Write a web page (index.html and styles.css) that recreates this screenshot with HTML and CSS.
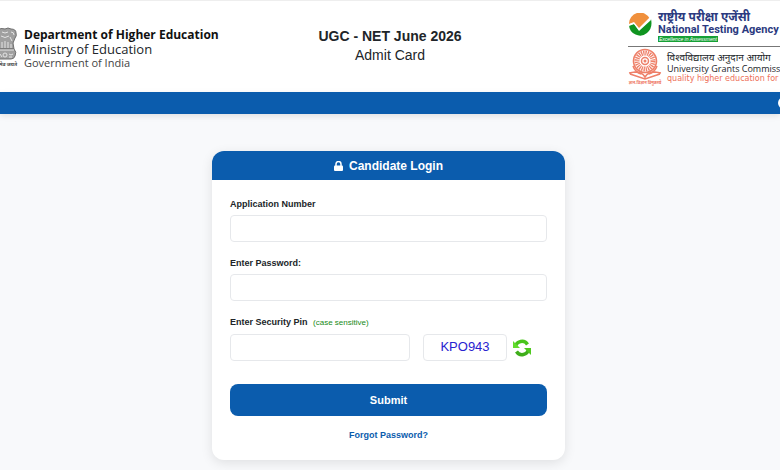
FILE: index.html
```html
<!DOCTYPE html>
<html lang="en">
<head>
    <meta charset="UTF-8">
    <meta name="viewport" content="width=device-width, initial-scale=1.0">
    <title>UGC - NET June 2026 Admit Card</title>
    <link rel="stylesheet" href="styles.css">
</head>
<body>
    <header class="header">
        <div class="brand">
            <!-- State emblem -->
            <svg class="emblem" viewBox="8 0 18 42" aria-hidden="true">
                <g fill="#a0a0a0" stroke="#707070" stroke-width="1">
                    <path d="M5 4q4-4 8-2q3-2 6 0q5 0 5 4q1 3-1 5l-2 5l1 6H5z"/>
                    <path d="M5 22h17q3 3 1 7q-1 3-4 3H5z"/>
                </g>
                <g fill="none" stroke="#e4e4e4" stroke-width="1">
                    <path d="M10 5q3 2 6 0M9 9q4 3 8 0M19 5q3 0 3 3M18 10l2 4M10 15v6M13 14v7M16 15v6M19 17v4M5 23h17"/>
                    <circle cx="13" cy="28" r="2"/>
                    <path d="M8 27l2 3M17 27q2 2 4 0M17 30h3"/>
                </g>
                <text class="emblem-text" x="25" y="39" text-anchor="end" lang="hi">सत्यमेव जयते</text>
            </svg>
            <div class="brand-text">
                <strong class="department">Department of Higher Education</strong>
                <span class="ministry">Ministry of Education</span>
                <span class="government">Government of India</span>
            </div>
        </div>

        <div class="title">
            <h1>UGC - NET June 2026</h1>
            <p>Admit Card</p>
        </div>

        <div class="partners">
            <div class="partner nta">
                <svg class="nta-logo" viewBox="0 0 24 24" aria-hidden="true">
                    <path d="M1 11A11 11 0 0 1 22 6L11 17L6 10z" fill="#f0903c"/>
                    <path d="M1 12l5-1l5 6L23 6Q25 15 19 20A11 11 0 0 1 1 12z" fill="#0f9420"/>
                    <path d="M1 11l5-2l5 6L22 4l1 3L11 18L6 11l-5 2z" fill="#fff"/>
                </svg>
                <div class="partner-text">
                    <span class="nta-hindi" lang="hi">राष्ट्रीय परीक्षा एजेंसी</span>
                    <strong class="nta-name">National Testing Agency</strong>
                    <em class="nta-motto">Excellence in Assessment</em>
                </div>
            </div>
            <div class="partner ugc">
                <svg class="ugc-logo" viewBox="0 0 34 38" aria-hidden="true">
                    <g fill="none" stroke="#ee8069">
                        <circle cx="17" cy="13" r="11.5" stroke-width="1.6"/>
                        <circle cx="17" cy="13" r="8" stroke-width="5" stroke-dasharray="1.3 .8"/>
                        <circle cx="17" cy="13" r="3.5" stroke-width="1.5"/>
                        <path d="M5 18q2 6 8 8M29 18q-2 6-8 8" stroke-width="1.5"/>
                        <path d="M1 25l6-1q7 0 10 5q3-5 10-5l6 1M2 26l15 5l15-5" stroke-width="1.6"/>
                    </g>
                    <circle cx="17" cy="13" r="1.5" fill="#ee8069"/>
                    <text class="ugc-logo-text" x="17" y="36" text-anchor="middle" lang="hi">ज्ञान-विज्ञान विमुक्तये</text>
                </svg>
                <div class="partner-text">
                    <span class="ugc-hindi" lang="hi">विश्वविद्यालय अनुदान आयोग</span>
                    <span class="ugc-name">University Grants Commission</span>
                    <span class="ugc-motto">quality higher education for all</span>
                </div>
            </div>
        </div>
    </header>

    <nav class="navbar">
        <a class="nav-link" href="#" aria-label="Home">
            <svg viewBox="0 0 12 12" aria-hidden="true">
                <circle cx="6" cy="6" r="5" fill="none" stroke="#fff" stroke-width="2"/>
            </svg>
        </a>
    </nav>

    <main class="main">
        <section class="card">
            <h2 class="card-header">
                <svg class="lock" viewBox="0 0 9 10" aria-hidden="true">
                    <path d="M2 5V3a2.5 2.5 0 0 1 5 0v2" fill="none" stroke="#fff" stroke-width="1.5"/>
                    <rect x="0" y="4.4" width="9" height="5.6" rx="1" fill="#fff"/>
                </svg>
                Candidate Login
            </h2>
            <form class="card-body">
                <div class="field">
                    <label for="application">Application Number</label>
                    <input type="text" id="application">
                </div>
                <div class="field">
                    <label for="password">Enter Password:</label>
                    <input type="password" id="password">
                </div>
                <div class="field">
                    <label for="pin">Enter Security Pin <span class="hint">(case sensitive)</span></label>
                    <div class="pin-row">
                        <input type="text" id="pin">
                        <div class="captcha-group">
                            <div class="captcha">KPO943</div>
                            <button type="button" class="refresh" aria-label="Refresh security pin">
                                <svg viewBox="0 0 18 18" aria-hidden="true">
                                    <path d="M2.5 8a6.5 6.500 0 0 1 12-2.500" fill="none" stroke="#49c51c" stroke-width="3.4"/>
                                    <path d="M15.5 10a6.500 6.500 0 0 1-12 2.500" fill="none" stroke="#3fae1b" stroke-width="3.4"/>
                                    <path d="M0 2v7h7z" fill="#62dc2c"/>
                                    <path d="M18 16V9h-7z" fill="#4fc91f"/>
                                </svg>
                            </button>
                        </div>
                    </div>
                </div>
                <button type="submit" class="submit">Submit</button>
                <a class="forgot" href="#">Forgot Password?</a>
            </form>
        </section>
    </main>
</body>
</html>
```
FILE: styles.css
```css
* {
    box-sizing: border-box;
}

body {
    margin: 0;
    min-height: 100vh;
    font-family: "Liberation Sans", Arial, sans-serif;
    color: #212529;
    background-color: #f8f9fb;
    overflow-x: hidden;
}

/* Header */
.header {
    display: grid;
    grid-template-columns: minmax(0, 1fr) auto minmax(0, 1fr);
    align-items: start;
    height: 92px;
    background-color: white;
    border-top: 1px solid #eee;
}

.brand {
    display: flex;
    gap: 6px;
    padding-top: 26px;
    white-space: nowrap;
}

.emblem {
    width: 18px;
    height: 42px;
}

.emblem-text {
    font-family: "Noto Sans", sans-serif;
    font-size: 5px;
    font-weight: bold;
    fill: #444;
}

.brand-text {
    display: flex;
    flex-direction: column;
    font-family: "Open Sans", sans-serif;
}

.department {
    font-size: 12px;
    line-height: 16px;
    color: #111;
}

.ministry {
    font-size: 13px;
    line-height: 13px;
}

.government {
    font-size: 11px;
    line-height: 13px;
    color: #444;
}

.title {
    padding-top: 26px;
    text-align: center;
}

.title h1,
.title p {
    margin: 0;
    font-size: 14px;
    line-height: 19px;
}

.partners {
    justify-self: end;
    width: 152px;
    padding-top: 9px;
    overflow: hidden;
    white-space: nowrap;
}

.partner {
    display: flex;
}

.partner-text {
    display: flex;
    flex-direction: column;
    align-items: flex-start;
}

.nta {
    gap: 6px;
    height: 36px;
    color: #2b3a80;
}

.nta-logo {
    flex: none;
    width: 24px;
    height: 24px;
    margin-top: 3px;
}

.nta-hindi {
    font-family: "Noto Sans", "Noto Sans Devanagari", sans-serif;
    font-size: 12px;
    font-weight: bold;
    line-height: 13px;
}

.nta-name {
    font-family: Roboto, sans-serif;
    font-size: 11px;
    line-height: 13px;
}

.nta-motto {
    padding: 0 1px;
    font-size: 5px;
    line-height: 6px;
    color: white;
    background-color: #16a035;
}

.ugc {
    gap: 5px;
    border-top: 1px solid #777;
    padding-top: 1px;
}

.ugc-logo {
    flex: none;
    width: 34px;
    height: 38px;
}

.ugc-logo-text {
    font-family: "Noto Sans", sans-serif;
    font-size: 4px;
    font-weight: bold;
    fill: #ee7059;
}

.ugc .partner-text {
    padding-top: 4px;
}

.ugc-hindi {
    font-family: "Noto Sans", "Noto Sans Devanagari", sans-serif;
    font-size: 10px;
    line-height: 11px;
}

.ugc-name {
    font-family: "Open Sans", sans-serif;
    font-size: 9px;
    line-height: 11px;
}

.ugc-motto {
    font-family: "DejaVu Sans", sans-serif;
    font-size: 8px;
    line-height: 9px;
    color: #ee7059;
}

/* Blue bar */
.navbar {
    display: flex;
    justify-content: flex-end;
    align-items: center;
    height: 22px;
    background-color: #0b5cad;
    box-shadow: 0 2px 6px rgba(0, 0, 0, 0.1);
}

.nav-link {
    flex: none;
    width: 12px;
    height: 12px;
    margin-right: -10px;
}

.nav-link svg {
    display: block;
}

/* Login card */
.main {
    padding: 37px 3px 10px 0;
}

.card {
    max-width: 353px;
    margin: 0 auto;
    border-radius: 12px;
    background-color: white;
    box-shadow: 0 3px 12px rgba(0, 0, 0, 0.1);
    overflow: hidden;
}

.card-header {
    display: flex;
    justify-content: center;
    align-items: center;
    gap: 6px;
    height: 29px;
    margin: 0;
    font-size: 12px;
    color: white;
    background-color: #0b5cad;
}

.lock {
    width: 9px;
    height: 10px;
}

.card-body {
    display: flex;
    flex-direction: column;
    gap: 15px;
    padding: 18px 18px 19px;
}

.field {
    display: flex;
    flex-direction: column;
    gap: 5px;
}

.field label {
    font-size: 9px;
    font-weight: bold;
    line-height: 12px;
}

.hint {
    margin-left: 3px;
    font-weight: normal;
    font-size: 8px;
    color: #168a16;
}

.field input {
    width: 100%;
    height: 27px;
    padding: 0 8px;
    border: 1px solid #e6e8eb;
    border-radius: 4px;
    background-color: white;
}

.pin-row {
    display: grid;
    grid-template-columns: minmax(0, 180px) auto;
    justify-content: start;
    column-gap: 13px;
}

.captcha-group {
    display: flex;
    align-items: center;
    gap: 6px;
}

.captcha {
    width: 84px;
    height: 27px;
    border: 1px solid #e6e8eb;
    border-radius: 4px;
    font-size: 13px;
    line-height: 23px;
    text-align: center;
    color: #2822cf;
}

.refresh {
    width: 18px;
    height: 18px;
    padding: 0;
    border: none;
    background: none;
    cursor: pointer;
}

.refresh svg {
    display: block;
}

.submit {
    height: 32px;
    margin-top: 8px;
    border: none;
    border-radius: 8px;
    font-family: inherit;
    font-size: 11px;
    font-weight: bold;
    color: white;
    background-color: #0b5cad;
    cursor: pointer;
}

.forgot {
    align-self: center;
    margin-top: -2px;
    font-size: 9px;
    font-weight: bold;
    line-height: 12px;
    color: #0b5cad;
    text-decoration: none;
}
```
